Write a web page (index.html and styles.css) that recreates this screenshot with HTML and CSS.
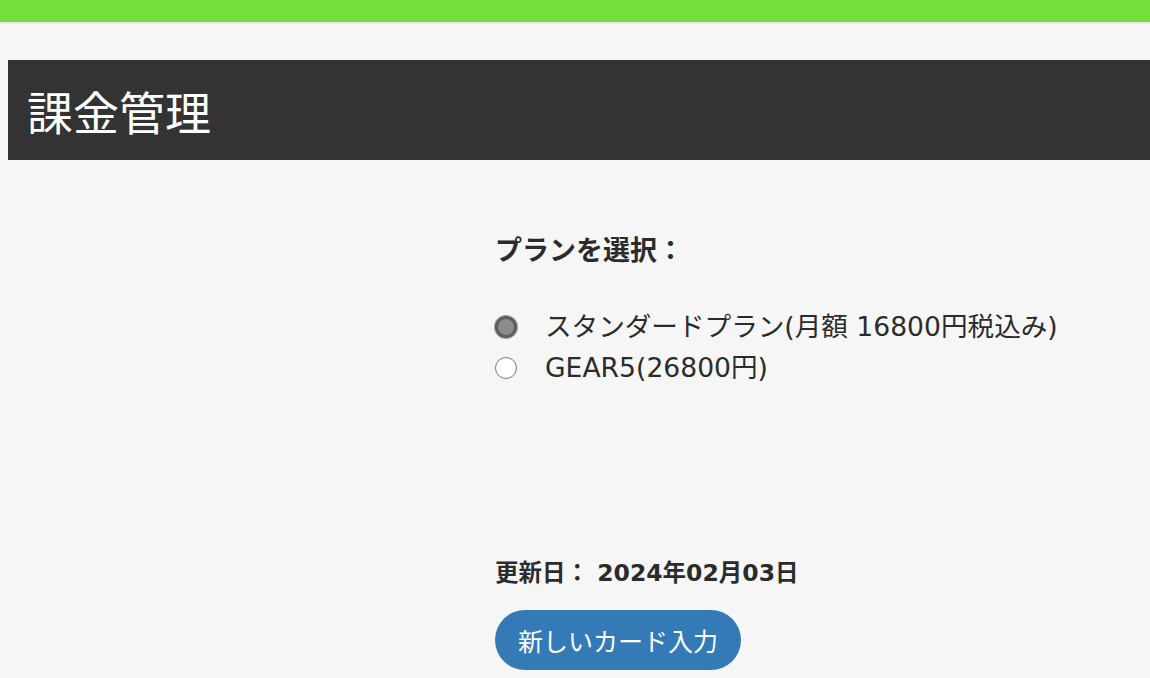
FILE: index.html
```html
<!DOCTYPE html>
<html lang="ja">
<head>
<meta charset="utf-8">
<link rel="stylesheet" href="styles.css">
</head>
<body>
<div class="topbar"></div>
<header class="page-header"><h1 class="page-title">課金管理</h1></header>
<main class="layout">
  <div class="side"></div>
  <section class="plan">
    <h2 class="plan-label">プランを選択：</h2>
    <ul class="options">
      <li class="option"><span class="radio checked"></span><span class="option-text">スタンダードプラン(月額 16800円税込み)</span></li>
      <li class="option"><span class="radio"></span><span class="option-text">GEAR5(26800円)</span></li>
    </ul>
    <p class="updated">更新日： 2024年02月03日</p>
    <button class="card-btn">新しいカード入力</button>
  </section>
</main>
</body>
</html>
```
FILE: styles.css
```css
html, body {
  margin: 0;
  padding: 0;
  background: #f6f6f6;
  overflow: hidden;
}
body {
  font-family: "DejaVu Sans", "Noto Sans CJK JP", sans-serif;
  color: #2b2b2b;
  width: 1150px;
  height: 678px;
}
.topbar {
  height: 22px;
  background: #72df3a;
  box-shadow: 0 1px 2px rgba(0,0,0,0.12);
}
.page-header {
  margin: 38px 0 0 8px;
  height: 100px;
  background: #333333;
  display: flex;
  align-items: center;
  padding-left: 19px;
}
.page-title {
  margin: 0;
  font-weight: normal;
  font-size: 46px;
  color: #ffffff;
  font-family: "Noto Sans CJK JP", sans-serif;
  line-height: 1;
}
.layout {
  display: grid;
  grid-template-columns: 487px 1fr;
  margin-left: 8px;
}
.plan {
  padding-top: 71px;
}
.plan-label {
  margin: 0;
  font-size: 27px;
  font-weight: bold;
  line-height: 36px;
  font-family: "Noto Sans CJK JP", sans-serif;
}
.options {
  list-style: none;
  margin: 39px 0 0 0;
  padding: 0;
}
.option {
  display: flex;
  align-items: center;
  height: 41px;
}
.radio {
  box-sizing: border-box;
  width: 22px;
  height: 22px;
  border-radius: 50%;
  border: 1.5px solid #767676;
  background: #ffffff;
  margin-right: 28px;
  flex: none;
}
.radio.checked {
  background: #8c8c8c;
  border: 3px solid #5e5e5e;
  box-shadow: 0 0 0 1px #a0a0a0;
}
.option-text {
  font-size: 26.6px;
  line-height: 36px;
}
.updated {
  margin: 170px 0 0 0;
  font-size: 23.5px;
  font-weight: bold;
  line-height: 30px;
}
.card-btn {
  margin-top: 22px;
  height: 60px;
  padding: 0 23px;
  border: none;
  border-radius: 30px;
  background: #337ab7;
  color: #ffffff;
  font-family: "Noto Sans CJK JP", sans-serif;
  font-size: 25px;
}
```
